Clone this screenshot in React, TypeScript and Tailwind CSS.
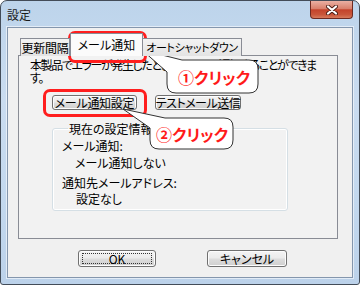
export default function App() {
  const btn =
    "flex items-center justify-center whitespace-nowrap rounded-[3px] border border-[#707070] bg-[linear-gradient(180deg,#f4f4f4_0%,#ebebeb_48%,#dddddd_52%,#cfcfcf_100%)] text-[12px] leading-[13px] shadow-[inset_0_0_0_1px_#fcfcfc]";

  return (
    <div className="relative h-[285px] w-[360px] bg-white font-['Noto_Sans_CJK_JP',sans-serif] text-[12px] leading-[13px] text-black [font-feature-settings:'palt']">
      <div className="flex h-full w-full flex-col overflow-hidden rounded-t-[7px] rounded-b-[3px] border border-[#434c58] bg-[linear-gradient(180deg,#bdd4eb_0%,#cadcf0_35%,#c3d8ee_70%,#bcd2ea_100%)]">
        {/* title bar */}
        <div className="flex h-[26px] shrink-0 justify-between pl-[6px] pr-[6px]">
          <span className="mt-[7px] text-[12px] leading-[13px] text-[#1a1a1a]">設定</span>
          <div className="flex h-[18px] w-[43px] items-center justify-center rounded-b-[4px] border border-t-0 border-[#6e2a21] bg-[linear-gradient(180deg,#eab0a3_0%,#d9806c_45%,#c4432b_52%,#c9563a_80%,#d77a5c_100%)]">
            <svg width="12" height="10" viewBox="0 0 12 10">
              <path d="M2 1.5 L10 8.5 M10 1.5 L2 8.5" stroke="#4a1d15" strokeWidth="4" strokeLinecap="round" />
              <path d="M2 1.5 L10 8.5 M10 1.5 L2 8.5" stroke="#ffffff" strokeWidth="2.2" strokeLinecap="round" />
            </svg>
          </div>
        </div>

        {/* client area */}
        <div className="mx-[6px] flex h-[251px] shrink-0 flex-col border border-[#8496ad] bg-[#f0f0f0] shadow-[0_0_0_1px_rgba(255,255,255,0.55)]">
          {/* tabs */}
          <div className="relative z-10 ml-[12px] mt-[5px] flex h-[23px] items-end">
            <div className="flex h-[18px] w-[50px] items-start justify-center whitespace-nowrap border border-b-0 border-[#898c95] bg-[linear-gradient(180deg,#f3f3f3,#e3e3e3)] pt-[2px] tracking-[-0.3px]">
              更新間隔
            </div>
            <div className="flex h-[23px] w-[73px] items-start justify-center whitespace-nowrap border border-b-0 border-[#898c95] bg-[#fbfbfb] pt-[4px]">
              メール通知
            </div>
            <div className="flex h-[18px] w-[99px] items-start justify-center whitespace-nowrap border border-b-0 border-l-0 border-[#898c95] bg-[linear-gradient(180deg,#f3f3f3,#e3e3e3)] pt-[2px] text-[11px] tracking-[-0.4px]">
              オートシャットダウン
            </div>
          </div>

          {/* tab panel */}
          <div className="-mt-px ml-[10px] flex h-[184px] w-[320px] flex-col border border-[#898c95] bg-[#f2f2f2] pl-[11px] pt-[2px]">
            <p className="whitespace-nowrap tracking-[-1.4px]">
              本製品でエラーが発生したときにメールで通知することができま
              <br />
              す。
            </p>

            <div className="ml-[22px] mt-[11px] flex gap-[18px]">
              <div className={`${btn} h-[15px] w-[85px] tracking-[-0.3px]`}>メール通知設定</div>
              <div className={`${btn} h-[15px] w-[86px] text-[11px] tracking-[-0.5px]`}>テストメール送信</div>
            </div>

            <fieldset className="ml-[22px] mt-[12px] h-[89px] w-[236px] rounded-[3px] border border-[#d5dfe5] pl-[9px] shadow-[inset_0_0_0_1px_#ffffff]">
              <legend className="ml-[6px] px-[1px]">現在の設定情報</legend>
              <div className="mt-[4px]">メール通知:</div>
              <div className="ml-[13px] mt-[4px]">メール通知しない</div>
              <div className="mt-[7px]">通知先メールアドレス:</div>
              <div className="ml-[14px] mt-[3px]">設定なし</div>
            </fieldset>
          </div>

          {/* dialog buttons */}
          <div className="ml-[70px] mt-[11px] flex gap-[51px]">
            <div className={`${btn} h-[17px] w-[78px] border-[#3c7fb1] shadow-[inset_0_0_0_1px_#6fd0f5]`}>
              <span className="flex h-[11px] w-[70px] items-center justify-center border border-dotted border-[#333]">
                OK
              </span>
            </div>
            <div className={`${btn} h-[17px] w-[80px]`}>キャンセル</div>
          </div>
        </div>
      </div>

      {/* annotation overlays */}
      <div className="absolute left-[68px] top-[31px] h-[32px] w-[79px] rounded-[7px] border-[3px] border-[#ff1e1e]" />
      <div className="absolute left-[43px] top-[89px] h-[28px] w-[104px] rounded-[7px] border-[3px] border-[#ff1e1e]" />

      <svg className="pointer-events-none absolute left-0 top-0" width="360" height="285" viewBox="0 0 360 285">
        <path
          d="M142 50 L182 60 H249 Q258 60 258 69 V84 Q258 93 249 93 H176 Q167 93 167 84 V72 Z"
          fill="#ffffff"
          stroke="#333333"
          strokeWidth="1"
        />
        <path
          d="M123 109 L165 118 H224 Q233 118 233 127 V140 Q233 149 224 149 H159 Q150 149 150 140 V128 Z"
          fill="#ffffff"
          stroke="#333333"
          strokeWidth="1"
        />
      </svg>

      <div className="absolute left-[178px] top-[67px] whitespace-nowrap text-[16px] font-bold leading-[20px] text-[#ff1a1a]">
        ①クリック
      </div>
      <div className="absolute left-[156px] top-[124px] whitespace-nowrap text-[16px] font-bold leading-[20px] text-[#ff1a1a]">
        ②クリック
      </div>
    </div>
  );
}
